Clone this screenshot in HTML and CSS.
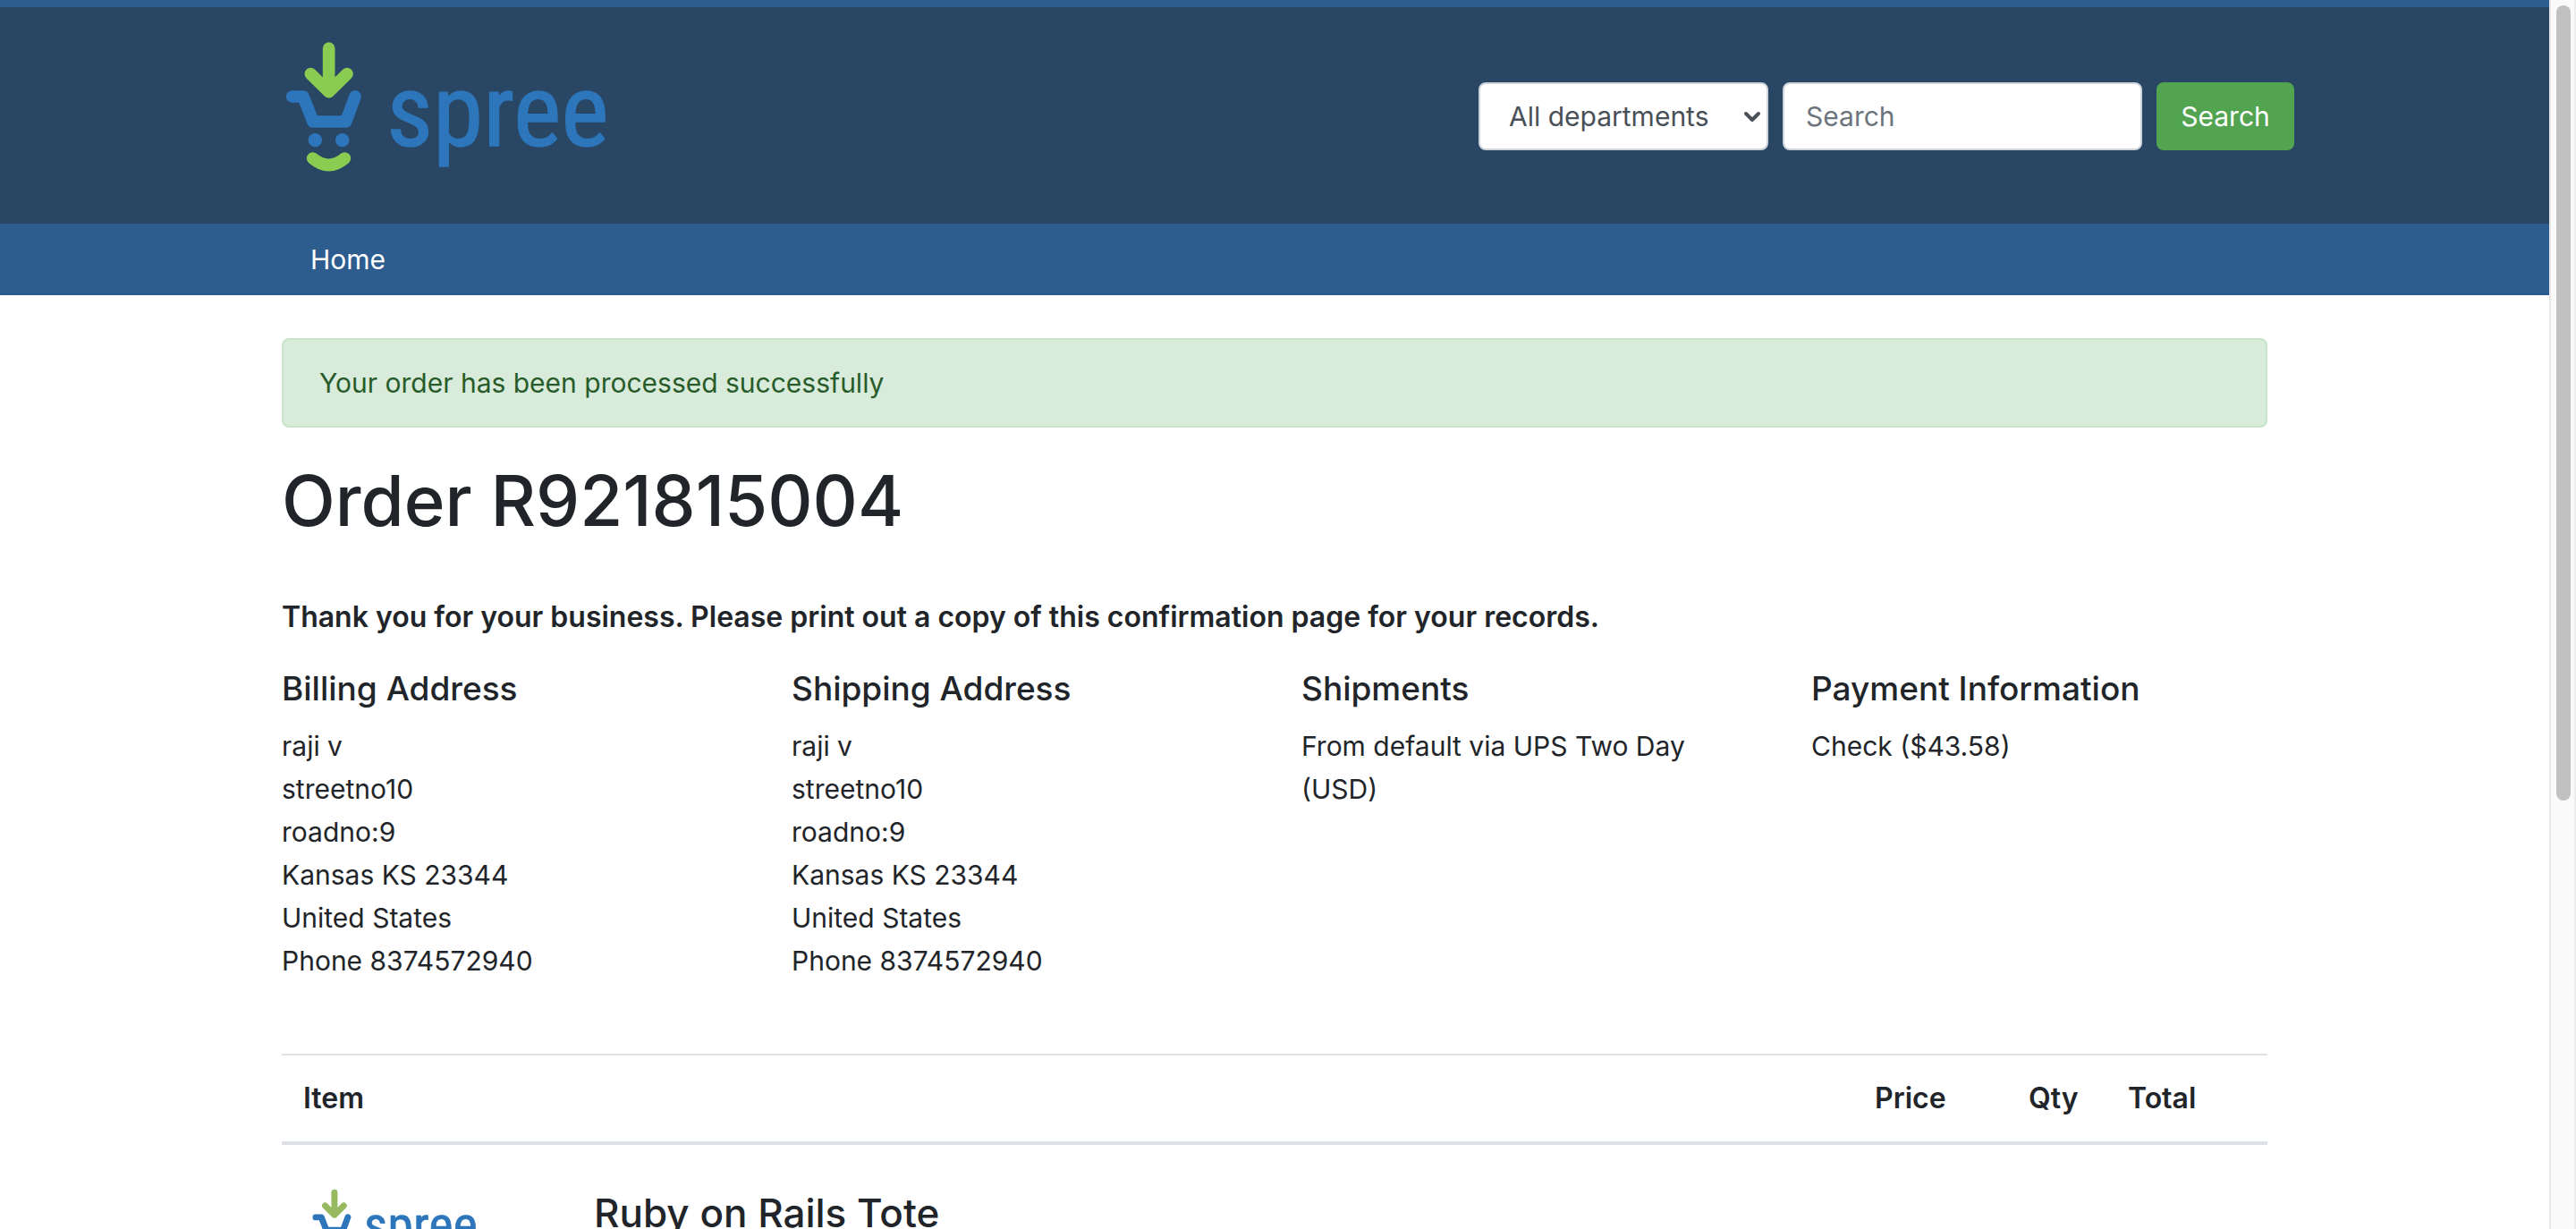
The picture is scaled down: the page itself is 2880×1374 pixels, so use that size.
FILE: index.html
```html
<!DOCTYPE html>
<html lang="en">
<head>
<meta charset="utf-8">
<meta name="viewport" content="width=device-width, initial-scale=1">
<title>Order R921815004</title>
<link rel="stylesheet" href="styles.css">
</head>
<body>
<svg class="defs" width="0" height="0" aria-hidden="true">
  <symbol id="spree-logo" viewBox="45 132 1110 450">
    <g fill="none" stroke-width="41" stroke-linecap="round" stroke-linejoin="round">
      <g class="logo-green">
        <path d="M203 162V308M142 248L203 308L264 248"/>
        <path d="M149 531Q203 576 256 531"/>
      </g>
      <path class="logo-blue" d="M80 324H117L150 408H260L291 324"/>
    </g>
    <circle class="logo-dot" cx="157" cy="470" r="23"/>
    <circle class="logo-dot" cx="248" cy="470" r="23"/>
    <text class="logo-word" x="396" y="490">spree</text>
  </symbol>
</svg>
<div class="window">
  <div class="page">
    <header class="header">
      <div class="container header-row">
        <a class="logo" href="#" aria-label="Spree home"><svg><use href="#spree-logo"/></svg></a>
        <form class="search">
          <div class="select-wrap">
            <select class="field department" aria-label="Department"><option>All departments</option></select>
            <svg class="chevron" viewBox="0 0 20 14" aria-hidden="true"><path d="M3 3L10 10L17 3"/></svg>
          </div>
          <input class="field keywords" type="search" placeholder="Search" aria-label="Search">
          <button class="search-button" type="submit">Search</button>
        </form>
      </div>
    </header>
    <nav class="nav">
      <div class="container"><a class="nav-link" href="#">Home</a></div>
    </nav>
    <main class="container content">
      <div class="alert" role="status">Your order has been processed successfully</div>
      <h1 class="title">Order R921815004</h1>
      <p class="thanks"><strong>Thank you for your business. Please print out a copy of this confirmation page for your records.</strong></p>
      <div class="details">
        <section>
          <h4 class="subtitle">Billing Address</h4>
          <address>raji v<br>streetno10<br>roadno:9<br>Kansas KS 23344<br>United States<br>Phone 8374572940</address>
        </section>
        <section>
          <h4 class="subtitle">Shipping Address</h4>
          <address>raji v<br>streetno10<br>roadno:9<br>Kansas KS 23344<br>United States<br>Phone 8374572940</address>
        </section>
        <section>
          <h4 class="subtitle">Shipments</h4>
          <p>From default via UPS Two Day (USD)</p>
        </section>
        <section>
          <h4 class="subtitle">Payment Information</h4>
          <p>Check ($43.58)</p>
        </section>
      </div>
      <table class="items">
        <colgroup><col class="col-image"><col><col class="col-price"><col class="col-qty"><col class="col-total"></colgroup>
        <thead>
          <tr><th colspan="2">Item</th><th>Price</th><th>Qty</th><th>Total</th></tr>
        </thead>
        <tbody>
          <tr>
            <td><svg class="product-image" role="img" aria-label="Ruby on Rails Tote"><use href="#spree-logo"/></svg></td>
            <td colspan="4"><h3 class="product-name">Ruby on Rails Tote</h3></td>
          </tr>
        </tbody>
      </table>
    </main>
  </div>
  <div class="scrollbar" aria-hidden="true"><div class="thumb"></div></div>
</div>
</body>
</html>
```
FILE: styles.css
```css
* { box-sizing: border-box; }

body {
  --green: #8acb52;
  --blue: #2d76bb;
  margin: 0;
  font: 30px/48px Inter, "Liberation Sans", sans-serif;
  color: #212529;
  background: #fff;
}

h1, h3, h4, p { margin: 0; font-weight: 500; }
p { font-weight: 400; }
address { font-style: normal; }

.defs { display: none; }
.logo-green { stroke: var(--green); }
.logo-blue { stroke: var(--blue); }
.logo-dot { fill: var(--blue); }
.logo-word {
  font: 342px "Roboto Condensed", Roboto, sans-serif;
  fill: var(--blue);
  stroke: var(--blue);
  stroke-width: 4px;
  stroke-linejoin: round;
}

.window { display: flex; height: 100vh; }
.page { flex: 1; min-width: 0; overflow: hidden; }

.scrollbar {
  width: 30px;
  padding: 6px 4px 0 6px;
  background: #fafafa;
  border-left: 2px solid #e8e8e8;
  border-right: 2px solid #ededed;
}
.thumb { width: 16px; height: 65%; border-radius: 8px; background: #c1c1c1; }

.container { max-width: 2280px; margin: 0 auto; padding: 0 30px; }

.header { border-top: 8px solid #2d5d8f; background: #294764; }
.header-row {
  display: flex;
  justify-content: space-between;
  align-items: flex-start;
  padding: 36px 0 56px 30px;
}
.logo svg { display: block; width: 370px; height: 150px; }

.search { display: flex; gap: 16px; padding-top: 48px; }
.field, .search-button {
  height: 76px;
  border: 2px solid #ced4da;
  border-radius: 8px;
  font: inherit;
}
.field { background: #fff; color: #495057; appearance: none; outline: none; }
.field::placeholder { color: #6c757d; opacity: 1; }
.select-wrap { position: relative; }
.department { width: 324px; padding: 0 32px; }
.chevron {
  position: absolute;
  right: 8px;
  top: 32px;
  width: 20px;
  height: 14px;
  fill: none;
  stroke: #495057;
  stroke-width: 4px;
  stroke-linecap: round;
  stroke-linejoin: round;
  pointer-events: none;
}
.keywords { width: 402px; padding: 0 24px; }
.search-button { width: 154px; padding: 0; border-color: #53a451; background: #53a451; color: #fff; }

.nav { background: #2d5d8f; border-bottom: 2px solid #2a5890; }
.nav-link { display: inline-block; padding: 16px 32px 14px; color: #fff; text-decoration: none; }
.nav .container { display: flex; }

.content { padding-top: 48px; }
.alert {
  padding: 24px 40px;
  border: 2px solid #c8e5cb;
  border-radius: 8px;
  background: #d9ebdb;
  color: #285b2a;
}
.title { margin-top: 34px; font-size: 78px; line-height: 96px; }
.thanks { margin-top: 58px; font-size: 32px; }
.thanks strong { font-weight: 600; }
.details { display: grid; grid-template-columns: repeat(4, 1fr); gap: 60px; margin-top: 32px; }
.subtitle { margin-bottom: 16px; font-size: 37px; line-height: 48px; }

.items { width: 100%; margin-top: 80px; border-collapse: collapse; table-layout: fixed; }
.items thead { border-top: 2px solid #dee2e6; border-bottom: 4px solid #dee2e6; }
.items th { padding: 24px; text-align: left; font-size: 32px; font-weight: 600; }
.items td { padding: 48px 24px; vertical-align: top; }
.col-image { width: 325px; }
.col-price { width: 172px; }
.col-qty { width: 111px; }
.col-total { width: 180px; }
.product-image { --green: #97b960; display: block; width: 189px; height: 77px; margin-left: 8px; }
.product-name { font-size: 44px; line-height: 56px; }
```
